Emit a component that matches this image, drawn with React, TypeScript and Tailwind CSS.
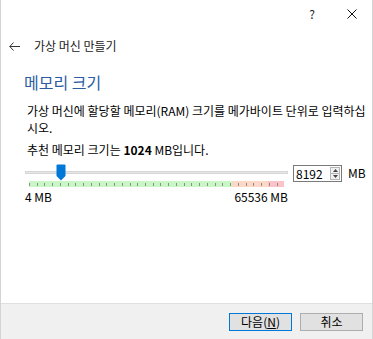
import React from "react";

const FONT = { fontFamily: '"Noto Sans CJK KR", "Liberation Sans", sans-serif' };

const ticks = Array.from({ length: 33 }, (_, i) => i);

const Spinner = () => (
  <div className="flex h-[17px] w-[49px] items-stretch border border-[#7a7a7a] bg-white">
    <div className="flex flex-1 items-center pl-[2px] text-[12px] leading-none text-black">8192</div>
    <div className="my-[1px] mr-[1px] flex w-[10px] flex-col border border-[#b5b5b5] bg-[#f0f0f0]">
      <div className="flex flex-1 items-center justify-center border-b border-[#b5b5b5]">
        <svg width="5" height="3" viewBox="0 0 5 3">
          <path d="M0 3 L2.5 0 L5 3 Z" fill="#444" />
        </svg>
      </div>
      <div className="flex flex-1 items-center justify-center">
        <svg width="5" height="3" viewBox="0 0 5 3">
          <path d="M0 0 L2.5 3 L5 0 Z" fill="#444" />
        </svg>
      </div>
    </div>
  </div>
);

const MemorySlider = () => (
  <div className="flex w-[263px] flex-col">
    <div className="relative h-[17px]">
      <div className="absolute left-0 right-0 top-[7px] h-[3px] border border-[#d6d6d6] bg-[#e7e7e7]" />
      <svg className="absolute left-[31px] top-0" width="10" height="17" viewBox="0 0 10 17">
        <path d="M0.5 1.5 Q0.5 0.5 1.5 0.5 L8.5 0.5 Q9.5 0.5 9.5 1.5 L9.5 12 L5 16.5 L0.5 12 Z" fill="#0078d7" />
      </svg>
    </div>
    <div className="ml-[4px] flex h-[6px] w-[255px]">
      <div className="w-[203px] bg-[#c8f7c5]" />
      <div className="w-[36px] bg-[#fdd8c7]" />
      <div className="w-[16px] bg-[#fbc3c8]" />
    </div>
    <div className="-mt-[6px] ml-[4px] flex h-[6px] w-[255px] items-center">
      {ticks.map((i) => (
        <div key={i} className="mr-[7px] h-[3px] w-[1px] bg-[#8c8c8c]" />
      ))}
    </div>
    <div className="mt-[3px] flex justify-between text-[12px] leading-[14px] text-black">
      <span>4 MB</span>
      <span>65536 MB</span>
    </div>
  </div>
);

export default function App() {
  return (
    <div
      className="flex h-[339px] w-[373px] flex-col border-l border-r border-[#d4d4d4] bg-white text-[#000]"
      style={FONT}
    >
      <div className="flex h-[28px] items-center justify-end pr-[15px]">
        <span className="mr-[32px] text-[12px] text-[#222]">?</span>
        <svg width="10" height="10" viewBox="0 0 10 10">
          <path d="M0.5 0.5 L9.5 9.5 M9.5 0.5 L0.5 9.5" stroke="#111" strokeWidth="1" />
        </svg>
      </div>

      <div className="mt-[10px] flex items-center pl-[8px]">
        <svg width="11" height="9" viewBox="0 0 11 9">
          <path d="M4.5 0.5 L0.8 4.5 L4.5 8.5 M0.8 4.5 L11 4.5" stroke="#333" strokeWidth="1" fill="none" />
        </svg>
        <span className="ml-[14px] text-[12px] leading-[16px] text-[#222]">가상 머신 만들기</span>
      </div>

      <div className="ml-[23px] mt-[18px] text-[16px] leading-[20px] text-[#2a5ba3]">메모리 크기</div>

      <div className="ml-[26px] mt-[10px] text-[12px] leading-[17px] text-black">
        <p className="whitespace-nowrap">가상 머신에 할당할 메모리(RAM) 크기를 메가바이트 단위로 입력하십</p>
        <p>시오.</p>
        <p className="mt-[5px]">
          추천 메모리 크기는 <b>1024</b> MB입니다.
        </p>
      </div>

      <div className="ml-[24px] mt-[6px] flex items-start">
        <MemorySlider />
        <div className="ml-[5px] mt-[1px]">
          <Spinner />
        </div>
        <span className="ml-[6px] mt-[2px] text-[12px] leading-[14px]">MB</span>
      </div>

      <div className="flex-1" />

      <div className="flex h-[36px] items-center justify-end gap-[8px] border-t border-[#dfdfdf] bg-[#f0f0f0] pr-[9px]">
        <button className="h-[18px] w-[63px] border border-[#0078d7] bg-[#e1e1e1] text-[12px] leading-none text-black">
          다음(<span className="underline">N</span>)
        </button>
        <button className="h-[18px] w-[63px] border border-[#adadad] bg-[#e1e1e1] text-[12px] leading-none text-black">
          취소
        </button>
      </div>
    </div>
  );
}
